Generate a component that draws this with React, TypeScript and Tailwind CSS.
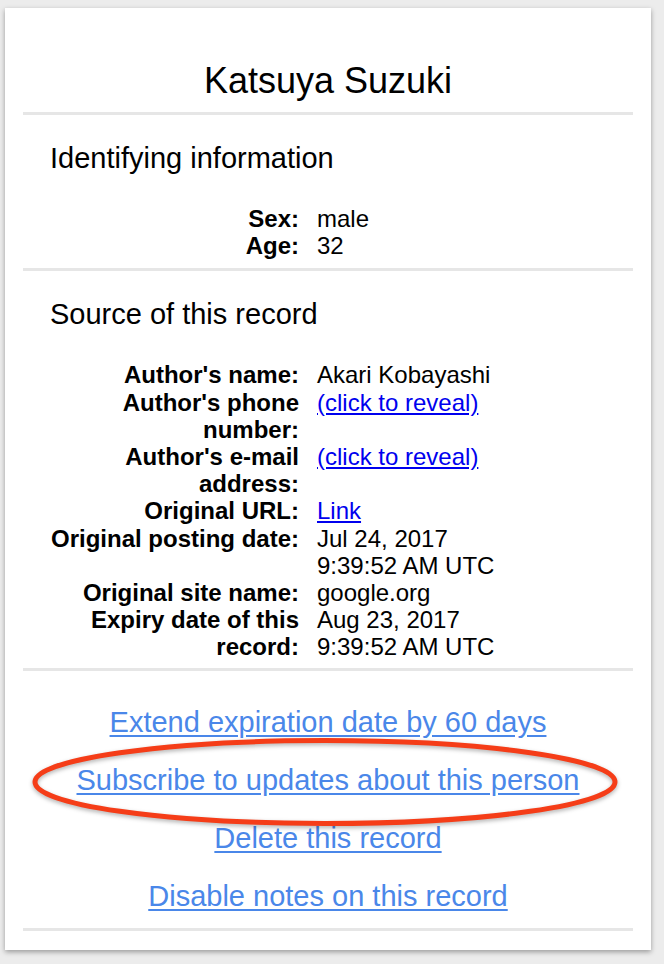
const rows: { label: string; value: string; link?: boolean }[] = [
  { label: "Author's name:", value: "Akari Kobayashi" },
  { label: "Author's phone number:", value: "(click to reveal)", link: true },
  { label: "Author's e-mail address:", value: "(click to reveal)", link: true },
  { label: "Original URL:", value: "Link", link: true },
  { label: "Original posting date:", value: "Jul 24, 2017 9:39:52 AM UTC" },
  { label: "Original site name:", value: "google.org" },
  { label: "Expiry date of this record:", value: "Aug 23, 2017 9:39:52 AM UTC" },
]

const actions = [
  "Extend expiration date by 60 days",
  "Subscribe to updates about this person",
  "Delete this record",
  "Disable notes on this record",
]

function Divider({ className = "" }: { className?: string }) {
  return <div className={`border-t-[3px] border-[#e6e6e6] ${className}`} />
}

function Field({ label, value, link }: { label: string; value: string; link?: boolean }) {
  return (
    <>
      <div className="text-right font-bold">{label}</div>
      <div className="w-[180px]">
        {link ? (
          <a href="#" className="text-[#0000ee] underline underline-offset-2">{value}</a>
        ) : (
          value
        )}
      </div>
    </>
  )
}

export default function App() {
  return (
    <div className="h-[964px] bg-[#ececec] pt-[8px] pl-[5px] font-['Liberation_Sans',Arial,sans-serif] text-black">
      <div className="relative h-[942px] w-[646px] bg-white px-[18px] shadow-[0_2px_5px_rgba(0,0,0,0.35)]">
        <h1 className="pt-[52px] text-center text-[36px] leading-[42px]">Katsuya Suzuki</h1>
        <Divider className="mt-[10px]" />

        <h2 className="mt-[26px] pl-[27px] text-[29px] leading-[34px]">Identifying information</h2>
        <div className="mt-[30px] grid grid-cols-[248px_auto] gap-x-[18px] pl-[28px] text-[24px] leading-[27.2px]">
          <Field label="Sex:" value="male" />
          <Field label="Age:" value="32" />
        </div>
        <Divider className="mt-[9px]" />

        <h2 className="mt-[26px] pl-[27px] text-[29px] leading-[34px]">Source of this record</h2>
        <div className="mt-[30px] grid grid-cols-[248px_auto] gap-x-[18px] pl-[28px] text-[24px] leading-[27.2px]">
          {rows.map((r) => (
            <Field key={r.label} {...r} />
          ))}
        </div>
        <Divider className="mt-[7px]" />

        <div className="mt-[34px] flex flex-col items-center gap-[24px] text-[29px] leading-[34px]">
          {actions.map((a) => (
            <a key={a} href="#" className="text-[#4a87e9] underline underline-offset-[3px]">
              {a}
            </a>
          ))}
        </div>
        <Divider className="mt-[15px]" />

        <svg
          className="pointer-events-none absolute left-[25px] top-[727px] drop-shadow-[0_2px_2px_rgba(0,0,0,0.3)]"
          width="590"
          height="94"
          viewBox="0 0 590 94"
        >
          <ellipse cx="295" cy="47" rx="290" ry="41.5" fill="none" stroke="#f53d18" strokeWidth="5" />
        </svg>
      </div>
    </div>
  )
}
